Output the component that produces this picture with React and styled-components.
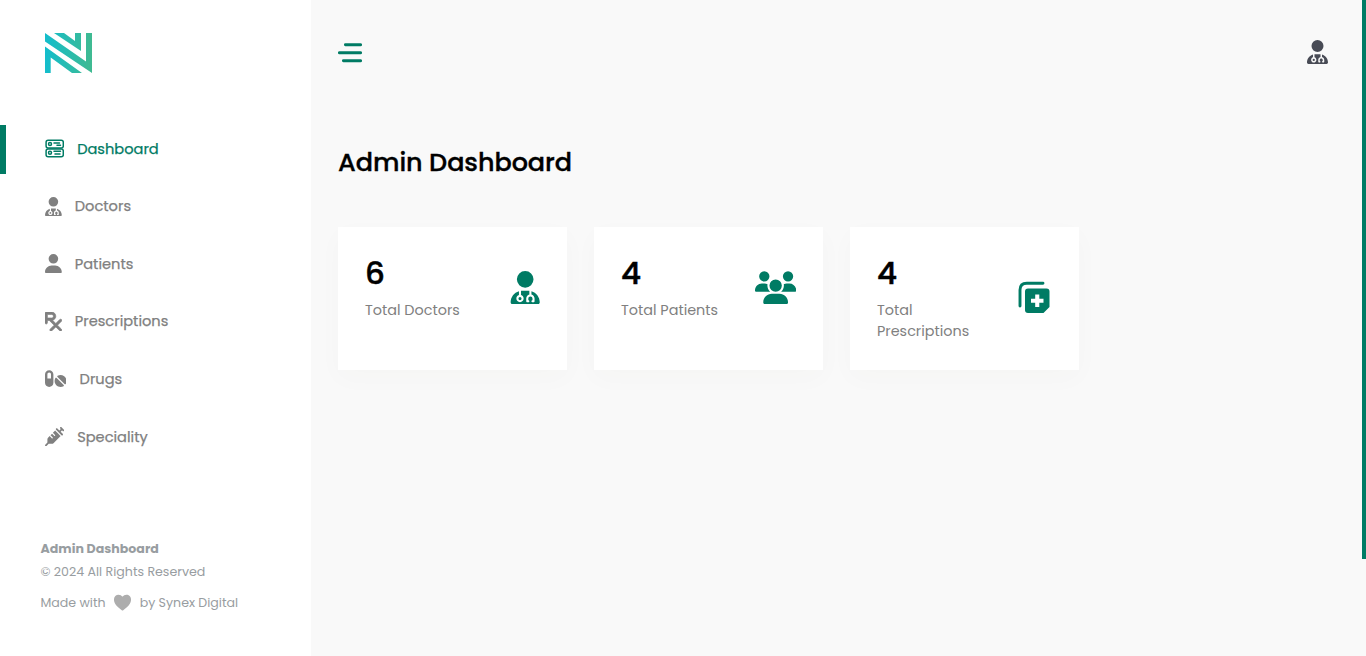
import React from "react";
import styled, { createGlobalStyle } from "styled-components";
import { FaUserDoctor, FaUser, FaPills, FaUsers, FaPrescription, FaSyringe } from "react-icons/fa6";
import { IoHeart } from "react-icons/io5";

const green = "#007b64";

const GlobalStyle = createGlobalStyle`
  * { box-sizing: border-box; }
  html, body { margin: 0; height: 100%; overflow: hidden; }
  body { background: #f9f9f9; font-family: Poppins, Inter, "Open Sans", sans-serif; }
  svg { display: block; flex: none; }
`;

const Page = styled.div`
  display: flex;
  height: 100vh;
`;

const Sidebar = styled.aside`
  width: 311px;
  flex: none;
  background: #fff;
  display: flex;
  flex-direction: column;
`;

const LogoArea = styled.div`
  height: 125px;
  padding: 33px 0 0 45px;
`;

const Nav = styled.nav`
  display: flex;
  flex-direction: column;
  gap: 8.6px;
`;

const NavItem = styled.a`
  display: flex;
  align-items: center;
  height: 49px;
  gap: 13.2px;
  padding: 0 0 1.85px ${(p) => (p.$active ? 38.8 : 44.8)}px;
  border-left: ${(p) => (p.$active ? `6px solid ${green}` : "0")};
  color: ${(p) => (p.$active ? green : "#808080")};

  svg {
    width: ${(p) => p.$iconWidth}px;
    height: 19.2px;
    stroke-width: ${(p) => p.$bold || 0};
  }
`;

const Label = styled.span`
  font-size: 14.6px;
  line-height: 22px;
  white-space: nowrap;
  -webkit-text-stroke: 0.25px currentColor;
`;

const Footer = styled.footer`
  margin-top: 75px;
  padding-left: 40.5px;
  color: #989da1;
  font-size: 12.6px;
  line-height: 23px;
  white-space: nowrap;
`;

const FooterTitle = styled.div`
  font-weight: 700;
`;

const Copyright = styled.div``;

const Credit = styled.div`
  display: flex;
  align-items: center;
  margin-top: 8px;
  gap: 6.5px;
  svg { color: #adadad; }
`;

const CreditText = styled.span``;

const Main = styled.main`
  flex: 1;
  padding: 0 33px 0 27px;
`;

const TopBar = styled.header`
  height: 104px;
  display: flex;
  align-items: center;
  justify-content: space-between;
  color: #484b55;
`;

const Profile = styled.div`
  padding: 0.6px 0.6px 0 0;
  svg { width: 21px; height: 24px; }
`;

const Title = styled.h1`
  margin: 39px 0 0;
  font-size: 25.5px;
  line-height: 38px;
  font-weight: 500;
  letter-spacing: -0.06px;
  color: #000;
  -webkit-text-stroke: 0.35px currentColor;
`;

const Cards = styled.section`
  display: flex;
  gap: 27px;
  margin-top: 46px;
`;

const Card = styled.article`
  width: 229px;
  height: 143px;
  padding: 27px;
  background: #fff;
  box-shadow: 0 8px 24px rgba(89, 72, 22, 0.025);
  display: flex;
  justify-content: space-between;
`;

const CardText = styled.div``;

const Count = styled.div`
  font-size: 31px;
  line-height: 38px;
  font-weight: 500;
  color: #000;
  -webkit-text-stroke: 0.5px currentColor;
`;

const Caption = styled.div`
  margin-top: 8px;
  font-size: 14.4px;
  line-height: 21px;
  color: #808080;
  max-width: 100px;
`;

const CardIcon = styled.div`
  height: ${(p) => p.$box || 67}px;
  display: flex;
  align-items: center;
  color: ${green};

  svg { width: ${(p) => p.$width}px; height: 33.3px; }
`;

const ScrollTrack = styled.div`
  width: 4px;
  flex: none;
`;

const ScrollThumb = styled.div`
  height: 559px;
  background: ${green};
`;

function Logo() {
  return (
    <svg width="47" height="40" viewBox="0 0 47 40">
      <defs>
        <linearGradient id="brand" x1="0" x2="1">
          <stop offset="0" stopColor="#13bdcc" />
          <stop offset="1" stopColor="#40ba91" />
        </linearGradient>
        <mask id="bands">
          <g fill="#fff">
            <path d="M0 0 41 28.500V0H47V40L0 8.500Z" />
            <path d="M9 0H19L30 8V0H36V18Z" />
            <path d="M0 13.500 37 40H27L5.700 24.500V40H0Z" />
          </g>
        </mask>
      </defs>
      <rect width="47" height="40" fill="url(#brand)" mask="url(#bands)" />
    </svg>
  );
}

function DashboardIcon() {
  return (
    <svg viewBox="0 0 19.200 19.200" fill="none" stroke="currentColor" strokeLinecap="round">
      <rect x="1.100" y="1.200" width="17.200" height="7.900" rx="2" />
      <rect x="1.100" y="9.900" width="17.200" height="7.900" rx="2" />
      <circle cx="5" cy="5.100" r="1.500" />
      <circle cx="5" cy="13.700" r="1.500" />
      <path d="M9 4h5.500M12 6.300h3.500M9 12.300h6.500M10 14.900h5" />
    </svg>
  );
}

function MenuIcon() {
  return (
    <svg width="24" height="21" viewBox="0 0 24 21" fill="none" stroke={green} strokeWidth="2.900" strokeLinecap="round">
      <path d="M7.400 2.800H22.600M1.400 10.800H22.600M5.400 18.700H22.600" />
    </svg>
  );
}

function PrescriptionsIcon() {
  return (
    <svg viewBox="0 0 33.600 33.300">
      <path d="M2 25V9Q2 2.200 8.800 2.200H25" fill="none" stroke={green} strokeWidth="2.900" strokeLinecap="round" />
      <path fill={green} fillRule="evenodd" d="M10 7.500H28.500Q31.500 7.500 31.500 10.500V26L25.500 32H10Q7 32 7 29V10.500Q7 7.500 10 7.500ZM17.200 13.500V17.700H13V21.700H17.200V25.900H21.300V21.700H25.500V17.700H21.300V13.500Z" />
    </svg>
  );
}

const navItems = [
  { label: "Dashboard", icon: <DashboardIcon />, width: 19.2, active: true, bold: 1.5 },
  { label: "Doctors", icon: <FaUserDoctor />, width: 16.8 },
  { label: "Patients", icon: <FaUser />, width: 16.8 },
  { label: "Prescriptions", icon: <FaPrescription />, width: 16.8, bold: 18 },
  { label: "Drugs", icon: <FaPills />, width: 21.6 },
  { label: "Speciality", icon: <FaSyringe />, width: 19.2 },
];

const stats = [
  { count: 6, caption: "Total Doctors", icon: <FaUserDoctor />, width: 30.4 },
  { count: 4, caption: "Total Patients", icon: <FaUsers />, width: 41.3 },
  { count: 4, caption: "Total Prescriptions", icon: <PrescriptionsIcon />, width: 33.6, box: 87 },
];

export default function App() {
  return (
    <Page>
      <GlobalStyle />
      <Sidebar>
        <LogoArea><Logo /></LogoArea>
        <Nav>
          {navItems.map((item) => (
            <NavItem key={item.label} $active={item.active} $iconWidth={item.width} $bold={item.bold}>
              {item.icon}
              <Label>{item.label}</Label>
            </NavItem>
          ))}
        </Nav>
        <Footer>
          <FooterTitle>Admin Dashboard</FooterTitle>
          <Copyright>© 2024 All Rights Reserved</Copyright>
          <Credit>
            <CreditText>Made with</CreditText>
            <IoHeart size={21} />
            <CreditText>by Synex Digital</CreditText>
          </Credit>
        </Footer>
      </Sidebar>
      <Main>
        <TopBar>
          <MenuIcon />
          <Profile><FaUserDoctor /></Profile>
        </TopBar>
        <Title>Admin Dashboard</Title>
        <Cards>
          {stats.map((stat) => (
            <Card key={stat.caption}>
              <CardText>
                <Count>{stat.count}</Count>
                <Caption>{stat.caption}</Caption>
              </CardText>
              <CardIcon $box={stat.box} $width={stat.width}>{stat.icon}</CardIcon>
            </Card>
          ))}
        </Cards>
      </Main>
      <ScrollTrack><ScrollThumb /></ScrollTrack>
    </Page>
  );
}
